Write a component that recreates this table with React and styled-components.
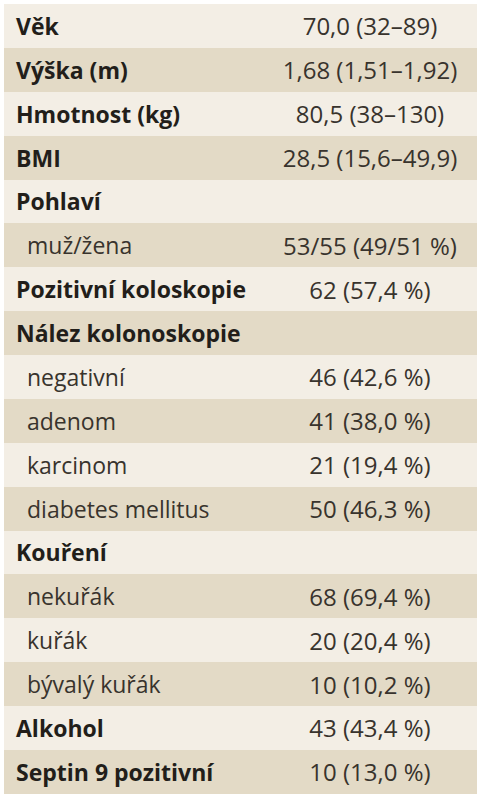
import React from 'react';
import styled, { createGlobalStyle } from 'styled-components';

const rows = [
  { label: 'Věk', value: '70,0 (32–89)', bold: true },
  { label: 'Výška (m)', value: '1,68 (1,51–1,92)', bold: true },
  { label: 'Hmotnost (kg)', value: '80,5 (38–130)', bold: true },
  { label: 'BMI', value: '28,5 (15,6–49,9)', bold: true },
  { label: 'Pohlaví', value: '', bold: true },
  { label: 'muž/žena', value: '53/55 (49/51\u00A0%)' },
  { label: 'Pozitivní koloskopie', value: '62 (57,4\u00A0%)', bold: true },
  { label: 'Nález kolonoskopie', value: '', bold: true },
  { label: 'negativní', value: '46 (42,6\u00A0%)' },
  { label: 'adenom', value: '41 (38,0\u00A0%)' },
  { label: 'karcinom', value: '21 (19,4\u00A0%)' },
  { label: 'diabetes mellitus', value: '50 (46,3\u00A0%)' },
  { label: 'Kouření', value: '', bold: true },
  { label: 'nekuřák', value: '68 (69,4\u00A0%)' },
  { label: 'kuřák', value: '20 (20,4\u00A0%)' },
  { label: 'bývalý kuřák', value: '10 (10,2\u00A0%)' },
  { label: 'Alkohol', value: '43 (43,4\u00A0%)', bold: true },
  { label: 'Septin 9 pozitivní', value: '10 (13,0\u00A0%)', bold: true },
];

export default function App() {
  return (
    <>
      <GlobalStyle />
      <StyledTable>
        {rows.map((row, i) => (
          <Row key={row.label} $dark={i % 2 === 1}>
            <Label $bold={row.bold}>{row.label}</Label>
            <Value>{row.value}</Value>
          </Row>
        ))}
      </StyledTable>
    </>
  );
}

const GlobalStyle = createGlobalStyle`
  html, body {
    margin: 0;
    padding: 0;
    background: #ffffff;
  }
  body {
    font-family: 'Open Sans', 'Noto Sans', sans-serif;
  }
`;

const StyledTable = styled.div`
  width: 482px;
  height: 800px;
  box-sizing: border-box;
  padding: 4px 5px 6px 4px;
  display: flex;
  flex-direction: column;
`;

const Row = styled.div`
  height: 43.875px;
  flex: none;
  display: grid;
  grid-template-columns: 1fr 222px;
  align-items: center;
  background: ${(p) => (p.$dark ? '#e3dac6' : '#f3eee5')};
`;

const Label = styled.div`
  padding-left: ${(p) => (p.$bold ? '12px' : '23px')};
  font-size: 23px;
  font-weight: ${(p) => (p.$bold ? 700 : 400)};
  color: ${(p) => (p.$bold ? '#221e1a' : '#38332d')};
  white-space: nowrap;
`;

const Value = styled.div`
  padding-left: 8px;
  font-size: 24px;
  text-align: center;
  color: #38332d;
  white-space: nowrap;
`;
